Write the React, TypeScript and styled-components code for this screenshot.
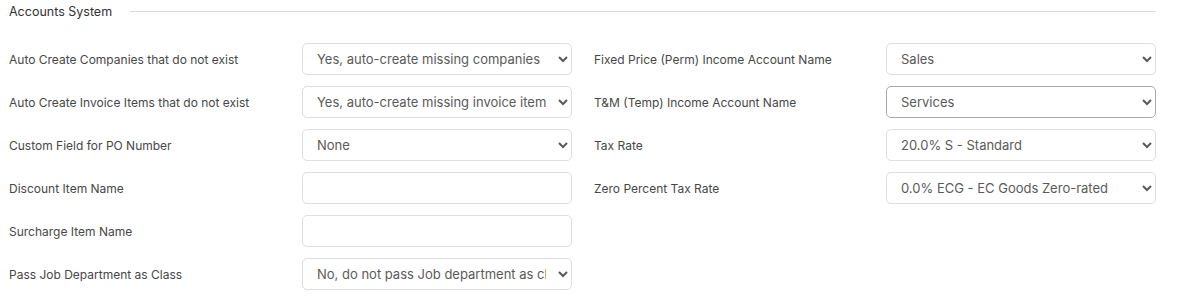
import React from "react";
import styled, { createGlobalStyle } from "styled-components";

const GlobalStyle = createGlobalStyle`
  body {
    margin: 0;
    background: #ffffff;
    font-family: Inter, "Noto Sans", sans-serif;
  }
`;

const Section = styled.section`
  padding: 3px 0 0 9px;
  width: 1147px;
`;

const Legend = styled.div`
  display: flex;
  align-items: center;
  gap: 18px;
  height: 16px;
  font-size: 12.5px;
  color: #333;

  &::after {
    content: "";
    flex: 1;
    height: 1px;
    background: #dcdcdc;
  }
`;

const Grid = styled.div`
  display: grid;
  grid-template-columns: 293px 270px 314px 270px;
  row-gap: 11px;
  margin-top: 24px;
`;

const Label = styled.label<{ $indent?: boolean }>`
  display: flex;
  align-items: center;
  height: 32px;
  padding-left: ${(p) => (p.$indent ? "22px" : "0")};
  font-size: 12px;
  color: #474747;
`;

const fieldBase = `
  box-sizing: border-box;
  width: 270px;
  height: 32px;
  border: 1px solid #dedede;
  border-radius: 5px;
  background: #fff;
  font-family: Inter, "Noto Sans", sans-serif;
  font-size: 13px;
  color: #5a5a5a;
  outline: none;
`;

const Select = styled.select<{ $active?: boolean }>`
  ${fieldBase}
  padding: 0 9px 0 10px;
  border-color: ${(p) => (p.$active ? "#a9a9a9" : "#dedede")};
`;

const TextInput = styled.input`
  ${fieldBase}
  padding: 0 14px;
`;

const Empty = styled.div``;

type Field = { label: string; value?: string; input?: boolean; active?: boolean };

const left: Field[] = [
  { label: "Auto Create Companies that do not exist", value: "Yes, auto-create missing companies" },
  { label: "Auto Create Invoice Items that do not exist", value: "Yes, auto-create missing invoice items" },
  { label: "Custom Field for PO Number", value: "None" },
  { label: "Discount Item Name", input: true },
  { label: "Surcharge Item Name", input: true },
  { label: "Pass Job Department as Class", value: "No, do not pass Job department as class" },
];

const right: (Field | null)[] = [
  { label: "Fixed Price (Perm) Income Account Name", value: "Sales" },
  { label: "T&M (Temp) Income Account Name", value: "Services", active: true },
  { label: "Tax Rate", value: "20.0% S - Standard" },
  { label: "Zero Percent Tax Rate", value: "0.0% ECG - EC Goods Zero-rated" },
  null,
  null,
];

const renderField = (f: Field | null, key: string, indent: boolean) => {
  if (!f) return [<Empty key={key + "l"} />, <Empty key={key + "f"} />];
  return [
    <Label key={key + "l"} $indent={indent}>
      {f.label}
    </Label>,
    f.input ? (
      <TextInput key={key + "f"} type="text" />
    ) : (
      <Select key={key + "f"} $active={f.active} defaultValue={f.value}>
        <option>{f.value}</option>
      </Select>
    ),
  ];
};

export default function App() {
  return (
    <>
      <GlobalStyle />
      <Section>
        <Legend>Accounts System</Legend>
        <Grid>
          {left.map((f, i) => [...renderField(f, "a" + i, false), ...renderField(right[i], "b" + i, true)])}
        </Grid>
      </Section>
    </>
  );
}
